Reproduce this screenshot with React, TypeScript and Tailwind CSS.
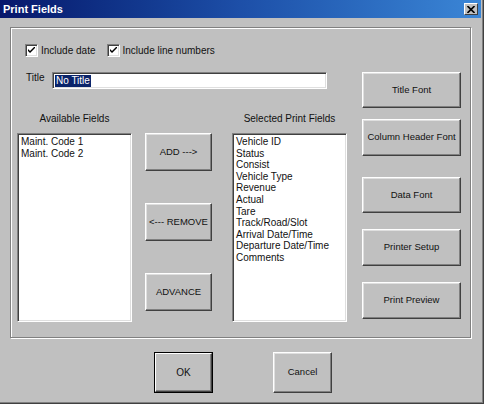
import React from "react";

const font = { fontFamily: '"Liberation Sans", Arial, sans-serif' };

function WinButton({
  label,
  w,
  h,
  def,
  className = "",
}: {
  label: string;
  w: string;
  h: string;
  def?: boolean;
  className?: string;
}) {
  if (def) {
    return (
      <div className={`${w} ${h} border border-black ${className}`}>
        <div className="w-full h-full border border-t-white border-l-white border-r-[#404040] border-b-[#404040] shadow-[inset_-1px_-1px_0_#808080] flex items-center justify-center text-[10px] text-[#111]">
          {label}
        </div>
      </div>
    );
  }
  return (
    <div
      className={`${w} ${h} border border-t-white border-l-white border-r-[#404040] border-b-[#404040] shadow-[inset_-1px_-1px_0_#808080,inset_1px_1px_0_#dfdfdf] flex items-center justify-center text-[9.5px] text-[#111] whitespace-nowrap ${className}`}
    >
      {label}
    </div>
  );
}

function CheckBox() {
  return (
    <div className="w-[13px] h-[13px] bg-white border border-t-[#808080] border-l-[#808080] border-r-white border-b-white shadow-[inset_1px_1px_0_#404040,inset_-1px_-1px_0_#dfdfdf] flex items-center justify-center">
      <svg width="7" height="7" viewBox="0 0 7 7">
        <path d="M0 2 L0 4 L2 6 L7 1 L7 -1 L2 4 Z" fill="#000" />
      </svg>
    </div>
  );
}

function ListBox({ items }: { items: string[] }) {
  return (
    <div className="w-[115px] h-[189px] bg-white border border-t-[#808080] border-l-[#808080] border-r-white border-b-white shadow-[inset_1px_1px_0_#404040,inset_-1px_-1px_0_#dfdfdf] pl-[3px] pt-[2px]">
      {items.map((it) => (
        <div key={it} className="text-[10px] leading-[11.6px] text-[#111] whitespace-nowrap">
          {it}
        </div>
      ))}
    </div>
  );
}

export default function App() {
  const selected = [
    "Vehicle ID",
    "Status",
    "Consist",
    "Vehicle Type",
    "Revenue",
    "Actual",
    "Tare",
    "Track/Road/Slot",
    "Arrival Date/Time",
    "Departure Date/Time",
    "Comments",
  ];
  return (
    <div className="w-[489px] h-[405px] bg-white overflow-hidden" style={font}>
      <div className="w-[484px] h-[404px] bg-[#c0c0c0] border-r border-b border-[#404040] shadow-[inset_-1px_-1px_0_#808080] flex flex-col">
        {/* Title bar */}
        <div className="w-[481px] h-[18px] bg-gradient-to-r from-[#08176b] via-[#1d4fa8] to-[#3b86d6] flex items-center justify-between pl-[3px] pr-[3px]">
          <span className="text-white font-bold text-[11px] leading-none">Print Fields</span>
          <div className="w-[14px] h-[12px] bg-[#c0c0c0] border border-t-white border-l-white border-r-[#404040] border-b-[#404040] flex items-center justify-center">
            <svg width="8" height="7" viewBox="0 0 8 7">
              <path d="M0.5 0 L7.5 7 M7.5 0 L0.5 7" stroke="#000" strokeWidth="1.6" />
            </svg>
          </div>
        </div>

        {/* Group frame */}
        <div className="ml-[10px] mt-[9px] w-[461px] h-[311px] border border-[#808080] shadow-[inset_1px_1px_0_white,1px_1px_0_white] flex flex-col">
          {/* Checkbox row */}
          <div className="mt-[16px] pl-[14px] h-[13px] flex items-center text-[10px] text-[#111]">
            <CheckBox />
            <span className="ml-[3px]">Include date</span>
            <div className="ml-[11px]">
              <CheckBox />
            </div>
            <span className="ml-[3px]">Include line numbers</span>
          </div>

          {/* Main row */}
          <div className="mt-[15px] flex">
            <div className="w-[336px] flex flex-col">
              {/* Title row */}
              <div className="h-[17px] flex items-start">
                <span className="ml-[15px] w-[26px] text-[10px] leading-[12px] text-[#111]">Title</span>
                <div className="w-[275px] h-[17px] bg-white border border-t-[#808080] border-l-[#808080] border-r-white border-b-white shadow-[inset_1px_1px_0_#404040,inset_-1px_-1px_0_#dfdfdf] flex items-center pl-[2px]">
                  <span className="bg-[#0a246a] text-white text-[10px] leading-[12px] px-[1px]">No Title</span>
                </div>
              </div>

              {/* Labels */}
              <div className="mt-[24px] h-[12px] flex text-[10px] leading-[12px] text-[#111]">
                <div className="ml-[6px] w-[115px] text-center">Available Fields</div>
                <div className="ml-[100px] w-[115px] text-center">Selected Print Fields</div>
              </div>

              {/* Lists */}
              <div className="mt-[8px] flex">
                <div className="ml-[6px]">
                  <ListBox items={["Maint. Code 1", "Maint. Code 2"]} />
                </div>
                <div className="ml-[13px] flex flex-col gap-[32px]">
                  <WinButton label="ADD --->" w="w-[67px]" h="h-[38px]" />
                  <WinButton label="<--- REMOVE" w="w-[67px]" h="h-[38px]" />
                  <WinButton label="ADVANCE" w="w-[67px]" h="h-[38px]" />
                </div>
                <div className="ml-[20px]">
                  <ListBox items={selected} />
                </div>
              </div>
            </div>

            {/* Right column */}
            <div className="ml-[15px] flex flex-col">
              <WinButton label="Title Font" w="w-[99px]" h="h-[36px]" />
              <WinButton label="Column Header Font" w="w-[99px]" h="h-[37px]" className="mt-[11px]" />
              <WinButton label="Data Font" w="w-[99px]" h="h-[36px]" className="mt-[21px]" />
              <WinButton label="Printer Setup" w="w-[99px]" h="h-[37px]" className="mt-[16px]" />
              <WinButton label="Print Preview" w="w-[99px]" h="h-[37px]" className="mt-[16px]" />
            </div>
          </div>
        </div>

        {/* Bottom buttons */}
        <div className="mt-[14px] flex">
          <WinButton label="OK" w="w-[59px]" h="h-[41px]" def className="ml-[154px]" />
          <WinButton label="Cancel" w="w-[59px]" h="h-[41px]" className="ml-[60px]" />
        </div>
      </div>
    </div>
  );
}
